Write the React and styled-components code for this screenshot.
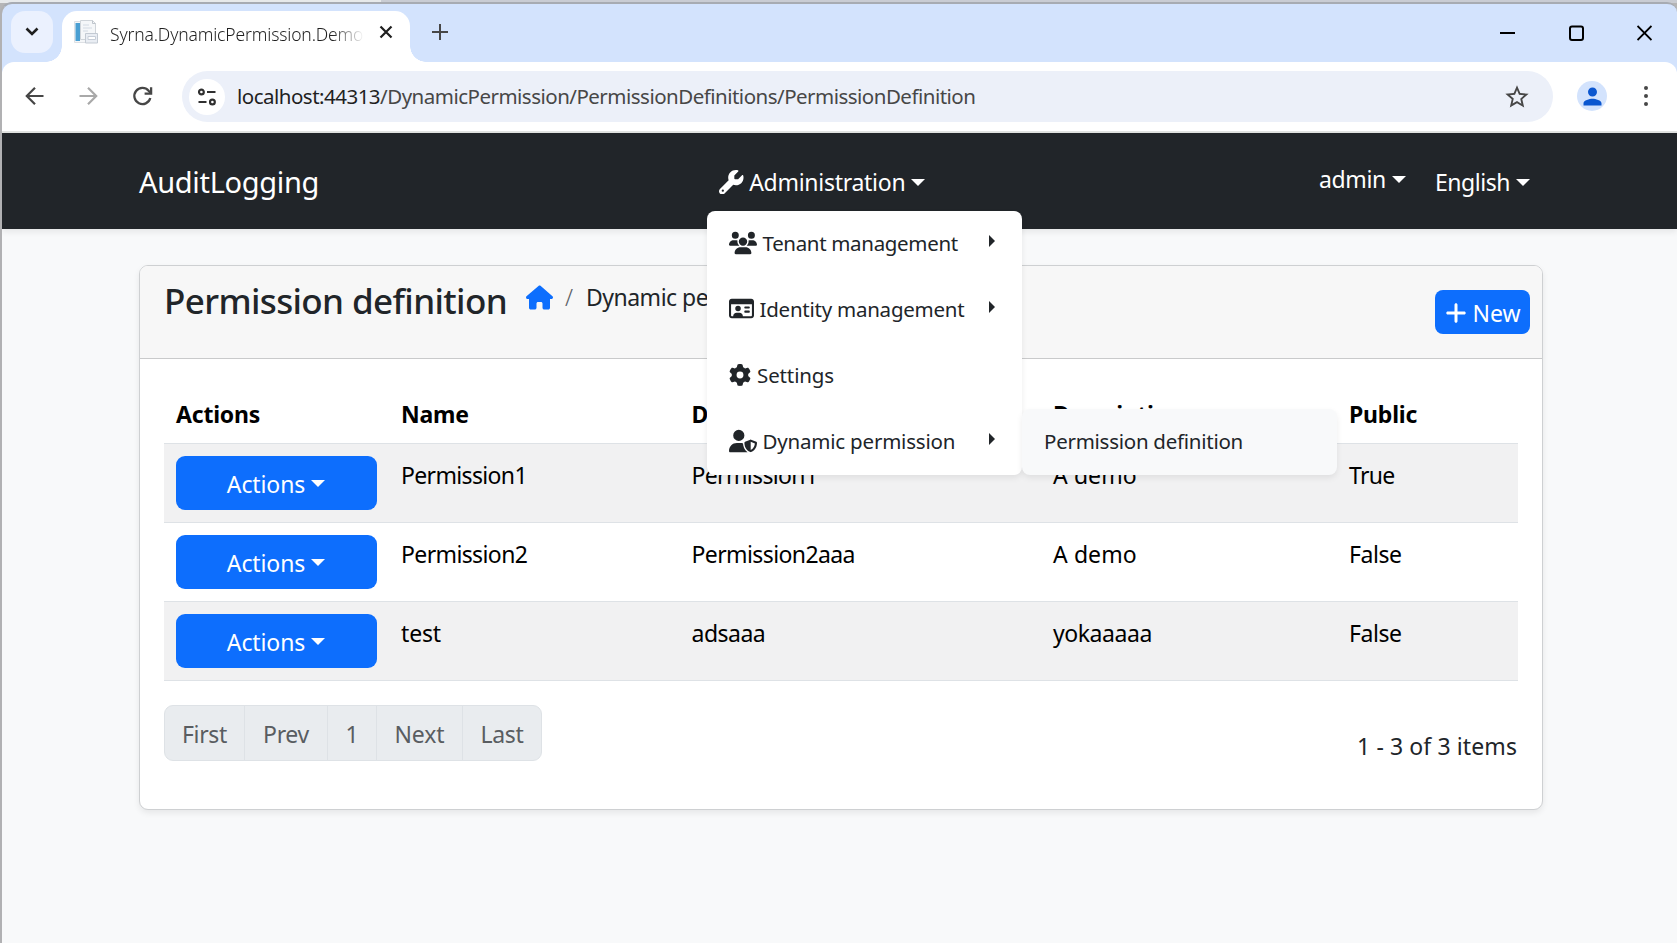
import React from "react";
import styled, { createGlobalStyle } from "styled-components";
import {
  FaWrench,
  FaUsers,
  FaRegIdCard,
  FaGear,
  FaUserShield,
  FaHouse,
  FaPlus,
} from "react-icons/fa6";
import { MdStarBorder, MdPerson } from "react-icons/md";

const GlobalStyle = createGlobalStyle`
  *, *::before, *::after { box-sizing: border-box; }
  body {
    margin: 0;
    font-family: "Noto Sans", "Open Sans", sans-serif;
    font-size: 23px;
    line-height: 36px;
    color: #212529;
    background: #b5b5b6;
    overflow: hidden;
  }
  svg { display: block; flex: none; }
`;

const Label = styled.span`
  letter-spacing: ${(p) => p.$ls || 0}px;
  white-space: pre;
`;

/* ---------- browser window ---------- */

const Desktop = styled.div`
  height: 943px;
  padding: 2px 0 0 0;
  background: linear-gradient(90deg, #e7e9ea 0 381px, #c9ccd3 381px) 0 0 / 100% 3px no-repeat, #b5b5b6;
`;

const Window = styled.div`
  height: 941px;
  display: flex;
  flex-direction: column;
  background: #d3e3fd;
  border-top: 2px solid #a7abb2;
  border-left: 2px solid #b1b1b3;
  border-radius: 12px 10px 0 0;
  overflow: hidden;
`;

const TitleBar = styled.div`
  height: 58px;
  flex: none;
  display: flex;
  align-items: flex-start;
  padding: 7px 25px 0 9px;
`;

const TabSearch = styled.div`
  width: 42px;
  height: 42px;
  border-radius: 14px;
  background: #ebf1fe;
  display: grid;
  place-items: center;
`;

const Tab = styled.div`
  position: relative;
  width: 348px;
  height: 51px;
  margin-left: 9px;
  padding: 0 17px 9px 12px;
  display: flex;
  align-items: center;
  background: #fff;
  border-radius: 15px 15px 0 0;

  &::before,
  &::after {
    content: "";
    position: absolute;
    bottom: 0;
    width: 16px;
    height: 16px;
  }
  &::before {
    right: 100%;
    background: radial-gradient(circle at 0 0, transparent 15.5px, #fff 16px);
  }
  &::after {
    left: 100%;
    background: radial-gradient(circle at 100% 0, transparent 15.5px, #fff 16px);
  }
`;

const TabTitle = styled.div`
  width: 254px;
  margin: 3px 0 0 12px;
  overflow: hidden;
  white-space: nowrap;
  font-size: 17.5px;
  font-weight: 350;
  line-height: 26px;
  letter-spacing: -0.15px;
  color: #1f1f1f;
  mask-image: linear-gradient(90deg, #000 222px, transparent 254px);
`;

const TabClose = styled.div`
  margin-left: auto;
`;

const NewTab = styled.div`
  margin: 13px 0 0 22px;
`;

const WindowButtons = styled.div`
  margin: 14px 0 0 auto;
  display: flex;
  gap: 53.5px;
`;

const Toolbar = styled.div`
  height: 71px;
  flex: none;
  display: flex;
  align-items: center;
  padding: 0 25px 1px 21px;
  background: #fff;
  border-bottom: 2px solid #e1e3e1;
  border-radius: 12px 12px 0 0;
`;

const NavIcons = styled.div`
  display: flex;
  gap: 30px;
`;

const AddressBar = styled.div`
  width: 1371px;
  height: 51px;
  margin: 1px 0 0 27px;
  padding: 0 22px 0 7px;
  display: flex;
  align-items: center;
  border-radius: 26px;
  background: #ecf0f9;
`;

const SiteInfo = styled.div`
  width: 36px;
  height: 36px;
  border-radius: 50%;
  background: #fff;
  display: grid;
  place-items: center;
`;

const Url = styled.div`
  margin: 0 auto 1px 12px;
  font-size: 20.5px;
  letter-spacing: -0.51px;
  white-space: nowrap;
  color: #474747;
`;

const Host = styled.span`
  color: #1f1f1f;
`;

const Avatar = styled.div`
  width: 30px;
  height: 30px;
  margin-left: 24px;
  border-radius: 50%;
  background: #d3e3fd;
  color: #0b57d0;
  display: grid;
  place-items: center;
`;

const Dots = styled.div`
  margin-left: auto;
  display: flex;
  flex-direction: column;
  gap: 4px;
  padding-right: 4px;
  i {
    width: 4px;
    height: 4px;
    border-radius: 50%;
    background: #474747;
  }
`;

/* ---------- page ---------- */

const Page = styled.div`
  flex: 1;
  background: #f8f9fa;
`;

const NavBar = styled.nav`
  position: relative;
  z-index: 2;
  height: 96px;
  display: flex;
  padding: 0 147px 0 137px;
  background: #212529;
  color: #fff;
  box-shadow: 0 3px 6px rgba(0, 0, 0, 0.075);
`;

const NavItem = styled.div`
  position: relative;
  height: 96px;
  display: flex;
  align-items: center;
  padding-top: ${(p) => p.$top || 0}px;
  padding-bottom: ${(p) => p.$bottom || 0}px;
  margin-left: ${(p) => p.$left || 0}px;
`;

const Brand = styled(NavItem)`
  width: 580px;
  font-size: 29px;
  letter-spacing: -0.32px;
`;

const NavRight = styled.div`
  margin-left: auto;
  display: flex;
`;

const Caret = styled.i`
  width: 14px;
  height: 7px;
  margin: ${(p) => p.$m || "0 0 0 6px"};
  border: solid transparent;
  border-width: 7px 7px 0;
  border-top-color: #fff;
`;

const Menu = styled.div`
  position: absolute;
  left: ${(p) => p.$x}px;
  top: ${(p) => p.$y}px;
  width: 315px;
  border-radius: 8px;
  background: ${(p) => p.$bg || "#fff"};
  color: #212529;
  font-size: 20.5px;
  box-shadow: 0 3px 6px rgba(0, 0, 0, 0.075);
`;

const MenuItem = styled.div`
  position: relative;
  height: 66px;
  display: flex;
  align-items: center;
  padding: 0 27px 3px 22px;
  gap: ${(p) => p.$gap || 5.5}px;
`;

const MenuArrow = styled.i`
  margin: 0 0 4px auto;
  border: solid transparent;
  border-width: 6px 0 6px 6px;
  border-left-color: #212529;
`;

const Card = styled.section`
  width: 1404px;
  height: 545px;
  margin: 36px 0 0 137px;
  border: 1px solid #ced0d2;
  border-radius: 9px;
  background: #fff;
  box-shadow: 0 3px 6px rgba(0, 0, 0, 0.075);
  overflow: hidden;
`;

const CardHeader = styled.header`
  height: 93px;
  display: flex;
  align-items: flex-start;
  padding: 11px 12px 0 24px;
  background: #f7f7f7;
  border-bottom: 1px solid #c9cacb;
`;

const Title = styled.h2`
  width: 362px;
  margin: 0;
  font-size: 35px;
  font-weight: 500;
  line-height: 47px;
  letter-spacing: -0.62px;
  white-space: nowrap;
`;

const Breadcrumb = styled.div`
  display: flex;
  align-items: center;
  padding-top: 2px;
  color: #212529;
  svg { color: #0d6efd; }
`;

const Slash = styled.span`
  margin: 0 13px 0 12px;
  font-weight: 300;
  color: #5c6166;
`;

const NewButton = styled.button`
  width: 95px;
  height: 44px;
  margin: 13px 0 0 auto;
  padding: 2px 0 0;
  display: flex;
  align-items: center;
  justify-content: center;
  gap: 4px;
  border: 0;
  border-radius: 8px;
  background: #0d6efd;
  color: #fff;
  font: 400 23px/36px "Noto Sans", sans-serif;
`;

const CardBody = styled.div`
  padding: 24px;
`;

const Table = styled.table`
  width: 1354px;
  table-layout: fixed;
  border-collapse: separate;
  border-spacing: 0;
  color: #000;
`;

const Th = styled.th`
  width: ${(p) => p.$w}px;
  height: 61px;
  padding: 13px 11px 11px 12px;
  text-align: left;
  font-weight: 700;
  letter-spacing: -0.2px;
  border-bottom: 1px solid #dee2e6;
`;

const Tr = styled.tr`
  background: ${(p) => (p.$striped ? "#f1f1f2" : "#fff")};
`;

const Td = styled.td`
  height: 79px;
  padding: 13px 11px 11px 12px;
  vertical-align: top;
  border-bottom: 1px solid #dee2e6;
`;

const ActionCell = styled(Td)`
  padding: 12px;
`;

const ActionButton = styled.button`
  width: 201px;
  height: 54px;
  padding: 2px 0 0;
  display: flex;
  align-items: center;
  justify-content: center;
  border: 0;
  border-radius: 9px;
  background: #0d6efd;
  color: #fff;
  font: 400 23px/36px "Noto Sans", sans-serif;
`;

const TableFooter = styled.div`
  display: flex;
  justify-content: space-between;
  margin-top: 24px;
`;

const Pagination = styled.div`
  height: 56px;
  display: flex;
  border: 1px solid #dee2e6;
  border-radius: 9px;
  background: #e9ecef;
  overflow: hidden;
`;

const PageLink = styled.div`
  width: ${(p) => p.$w}px;
  padding-top: 10px;
  text-align: center;
  color: #595d61;
  border-right: 1px solid #dee2e6;
  &:last-child { border-right: 0; }
`;

const ItemCount = styled.div`
  padding: 23px 1px 0 0;
  letter-spacing: 0.1px;
`;

const columns = [
  ["Actions", 225],
  ["Name", 290.5],
  ["Display name", 361.5],
  ["Description", 296],
  ["Public", 181],
];

const rows = [
  ["Permission1", "Permission1", "A demo", "True"],
  ["Permission2", "Permission2aaa", "A demo", "False"],
  ["test", "adsaaa", "yokaaaaa", "False"],
];

const spacing = {
  Permission1: -0.65,
  Permission2: -0.62,
  Permission2aaa: -0.6,
  test: -0.15,
  True: -0.7,
  False: -0.45,
  "A demo": 0.1,
  adsaaa: -0.5,
  yokaaaaa: -0.45,
};

const pages = [
  ["First", 80, -0.3],
  ["Prev", 83, -0.3],
  ["1", 49, 0],
  ["Next", 86, -0.1],
  ["Last", 78, -0.3],
];

const Favicon = () => (
  <svg width="24" height="24" viewBox="0 0 24 24">
    <path d="M.5 1.500h13v21H.5z" fill="#f4f6f8" stroke="#dde0e4" />
    <path d="M1.500 3h4.500v18h-4.500z" fill="#4a9fd2" />
    <path d="M6.500.500h12l3 3v16h-15z" fill="#f5f7f9" stroke="#cfd4d9" />
    <path d="M18.500.500v3h3" fill="none" stroke="#bfc5cc" />
    <path d="M9 5h6M9 8h9M9 11h5" stroke="#d3dae3" />
    <path d="M11.500 13.500h12v9.500h-12z" fill="#e9edf3" stroke="#c3cad3" />
    <path d="M14 16.500h7.500v3H14z" fill="#fff" stroke="#c7ced8" />
  </svg>
);

export default function App() {
  return (
    <>
      <GlobalStyle />
      <Desktop>
        <Window>
          <TitleBar>
            <TabSearch>
              <svg width="14" height="10" viewBox="0 0 14 10" fill="none" stroke="#1f1f1f" strokeWidth="2.6">
                <path d="M1.500 1.500 7 7l5.500-5.500" />
              </svg>
            </TabSearch>
            <Tab>
              <Favicon />
              <TabTitle>Syrna.DynamicPermission.Demo</TabTitle>
              <TabClose>
                <svg width="14" height="14" viewBox="0 0 14 14" stroke="#1f1f1f" strokeWidth="2.200">
                  <path d="M1.500 1.500l11 11M12.500 1.500l-11 11" />
                </svg>
              </TabClose>
            </Tab>
            <NewTab>
              <svg width="16" height="16" viewBox="0 0 16 16" stroke="#474747" strokeWidth="2">
                <path d="M8 0v16M0 8h16" />
              </svg>
            </NewTab>
            <WindowButtons>
              <svg width="15" height="16" viewBox="0 0 15 16" stroke="#000" strokeWidth="2">
                <path d="M0 8h15" />
              </svg>
              <svg width="15" height="16" viewBox="0 0 15 16" fill="none" stroke="#000" strokeWidth="2">
                <rect x="1" y="1.500" width="13" height="13.500" rx="2" />
              </svg>
              <svg width="15" height="16" viewBox="0 0 15 16" stroke="#000" strokeWidth="1.900">
                <path d="M.5 1l14 14M14.500 1l-14 14" />
              </svg>
            </WindowButtons>
          </TitleBar>

          <Toolbar>
            <NavIcons>
              <svg width="24" height="24" viewBox="0 0 24 24" fill="none" stroke="#474747" strokeWidth="2.200">
                <path d="M20.500 12H4M12 3.800 3.800 12l8.200 8.200" />
              </svg>
              <svg width="24" height="24" viewBox="0 0 24 24" fill="none" stroke="#a9a9a9" strokeWidth="2.200">
                <path d="M2.500 12H19M11 3.800l8.200 8.200-8.200 8.200" />
              </svg>
              <svg width="24" height="24" viewBox="0 0 24 24" fill="none" stroke="#474747" strokeWidth="2.300">
                <path d="M19.300 14a8.100 8.100 0 1 1-1.700-7.300l1.900 2.100" />
                <path d="M20.100 3.200v6.500h-6.500" />
              </svg>
            </NavIcons>
            <AddressBar>
              <SiteInfo>
                <svg width="18" height="18" viewBox="0 0 18 18" fill="none" stroke="#303030" strokeWidth="2.200">
                  <circle cx="3.400" cy="4" r="2.400" />
                  <path d="M9 4h8.500M.5 14h8" />
                  <circle cx="14.400" cy="14" r="2.400" />
                </svg>
              </SiteInfo>
              <Url>
                <Host>localhost:44313</Host>/DynamicPermission/PermissionDefinitions/PermissionDefinition
              </Url>
              <MdStarBorder size={28} color="#474747" />
            </AddressBar>
            <Avatar>
              <MdPerson size={27} />
            </Avatar>
            <Dots>
              <i />
              <i />
              <i />
            </Dots>
          </Toolbar>

          <Page>
            <NavBar>
              <Brand $top={1}>AuditLogging</Brand>
              <NavItem $top={2}>
                <FaWrench size={24.5} />
                <Label $ls={-0.28}> Administration</Label>
                <Caret />
                <Menu $x={-12} $y={78}>
                  <MenuItem>
                    <FaUsers size={28} />
                    <Label $ls={-0.33}>Tenant management</Label>
                    <MenuArrow />
                  </MenuItem>
                  <MenuItem>
                    <FaRegIdCard size={25} />
                    <Label $ls={-0.24}>Identity management</Label>
                    <MenuArrow />
                  </MenuItem>
                  <MenuItem $gap={6}>
                    <FaGear size={22} />
                    <Label $ls={-0.12}>Settings</Label>
                  </MenuItem>
                  <MenuItem>
                    <FaUserShield size={28} />
                    <Label $ls={-0.2}>Dynamic permission</Label>
                    <MenuArrow />
                    <Menu $x={315} $y={0} $bg="#f8f9fa">
                      <MenuItem>
                        <Label $ls={-0.26}>Permission definition</Label>
                      </MenuItem>
                    </Menu>
                  </MenuItem>
                </Menu>
              </NavItem>
              <NavRight>
                <NavItem $bottom={4}>
                  <Label $ls={-0.35}>admin</Label>
                  <Caret />
                </NavItem>
                <NavItem $top={2} $left={29}>
                  <Label $ls={-0.45}>English</Label>
                  <Caret />
                </NavItem>
              </NavRight>
            </NavBar>

            <Card>
              <CardHeader>
                <Title>Permission definition</Title>
                <Breadcrumb>
                  <FaHouse size={27} />
                  <Slash>/</Slash>
                  <Label $ls={-0.5}>Dynamic permission</Label>
                </Breadcrumb>
                <NewButton>
                  <FaPlus size={24} />
                  <Label>New</Label>
                </NewButton>
              </CardHeader>
              <CardBody>
                <Table>
                  <thead>
                    <tr>
                      {columns.map(([name, width]) => (
                        <Th key={name} $w={width}>{name}</Th>
                      ))}
                    </tr>
                  </thead>
                  <tbody>
                    {rows.map((cells, r) => (
                      <Tr key={r} $striped={r % 2 === 0}>
                        <ActionCell>
                          <ActionButton>
                            <Label $ls={-0.1}>Actions</Label>
                            <Caret $m="0 1px 2px 6px" />
                          </ActionButton>
                        </ActionCell>
                        {cells.map((text, c) => (
                          <Td key={c}>
                            <Label $ls={spacing[text]}>{text}</Label>
                          </Td>
                        ))}
                      </Tr>
                    ))}
                  </tbody>
                </Table>
                <TableFooter>
                  <Pagination>
                    {pages.map(([text, width, ls]) => (
                      <PageLink key={text} $w={width}>
                        <Label $ls={ls}>{text}</Label>
                      </PageLink>
                    ))}
                  </Pagination>
                  <ItemCount>1 - 3 of 3 items</ItemCount>
                </TableFooter>
              </CardBody>
            </Card>
          </Page>
        </Window>
      </Desktop>
    </>
  );
}
